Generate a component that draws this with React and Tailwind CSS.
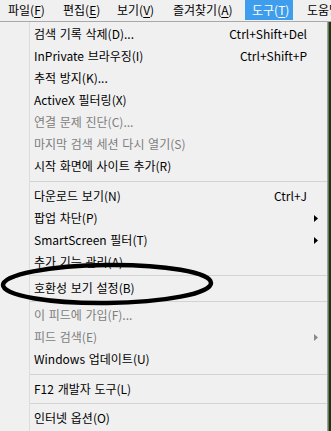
import React from "react";

const menuBar = [
  { label: "파일", key: "F", w: "w-[55px]" },
  { label: "편집", key: "E", w: "w-[54px]" },
  { label: "보기", key: "V", w: "w-[56px]" },
  { label: "즐겨찾기", key: "A", w: "w-[79px]" },
  { label: "도구", key: "T", w: "w-[48px]", active: true },
];

// sep: height of separator block, line sits in the middle
const items = [
  { text: "검색 기록 삭제(D)...", shortcut: "Ctrl+Shift+Del" },
  { text: "InPrivate 브라우징(I)", shortcut: "Ctrl+Shift+P" },
  { text: "추적 방지(K)..." },
  { text: "ActiveX 필터링(X)" },
  { text: "연결 문제 진단(C)...", disabled: true },
  { text: "마지막 검색 세션 다시 열기(S)", disabled: true },
  { text: "시작 화면에 사이트 추가(R)" },
  { sep: "h-[8px]" },
  { text: "다운로드 보기(N)", shortcut: "Ctrl+J" },
  { text: "팝업 차단(P)", sub: true },
  { text: "SmartScreen 필터(T)", sub: true },
  { text: "추가 기능 관리(A)" },
  { sep: "h-[4px]" },
  { text: "호환성 보기 설정(B)" },
  { sep: "h-[5px]" },
  { text: "이 피드에 가입(F)...", disabled: true },
  { text: "피드 검색(E)", sub: true, disabled: true },
  { text: "Windows 업데이트(U)" },
  { sep: "h-[8px]" },
  { text: "F12 개발자 도구(L)" },
  { sep: "h-[7px]" },
  { text: "인터넷 옵션(O)" },
];

function Arrow({ disabled }) {
  return (
    <svg width="4" height="7" viewBox="0 0 4 7" className="block">
      <path d="M0 0 L4 3.5 L0 7 Z" fill={disabled ? "#8a8a8a" : "#000"} />
    </svg>
  );
}

export default function App() {
  return (
    <div
      className="relative w-[331px] h-[431px] overflow-hidden bg-[#f0f0f0] text-[12px] text-black"
      style={{ fontFamily: '"Noto Sans CJK KR", "Noto Sans", sans-serif' }}
    >
      {/* menu bar */}
      <div className="flex h-[22px] border-b border-[#a9a9a9] pl-[1px]">
        {menuBar.map((m) => (
          <div
            key={m.label}
            className={`${m.w} shrink-0 h-[20px] flex items-center pl-[7px] whitespace-nowrap ${
              m.active ? "bg-[#3f9ded] text-white" : ""
            }`}
          >
            {m.label}(<u className="underline-offset-2">{m.key}</u>)
          </div>
        ))}
        <div className="shrink-0 h-[20px] flex items-center pl-[14px] whitespace-nowrap">
          도움말(<u>H</u>)
        </div>
      </div>

      {/* dropdown */}
      <div className="flex h-[409px]">
        <div className="w-[328px] shrink-0 flex border-r border-[#a0a0a0]">
          <div className="w-[30px] border-r border-[#dcdcdc]" />
          <div className="flex-1 pt-[1px] [word-spacing:1px]">
            {items.map((it, i) =>
              it.sep ? (
                <div key={i} className={`${it.sep} flex items-center`}>
                  <div className="w-full h-px bg-[#d3d3d3]" />
                </div>
              ) : (
                <div
                  key={i}
                  className={`h-[22px] flex items-center pl-[4px] whitespace-nowrap ${
                    it.disabled ? "text-[#7d7d7d]" : ""
                  }`}
                >
                  <span className="flex-1">{it.text}</span>
                  {it.shortcut && <span className="[word-spacing:0]">{it.shortcut}</span>}
                  <span className="w-[20px] flex items-center pl-[7px]">
                    {it.sub && <Arrow disabled={it.disabled} />}
                  </span>
                </div>
              )
            )}
          </div>
        </div>
        <div className="flex-1 bg-[#24301f] border-l border-[#5d7f3c]" />
      </div>

      {/* hand-drawn annotation */}
      <svg
        className="absolute left-0 top-0 pointer-events-none"
        width="331"
        height="431"
      >
        <ellipse
          cx="107"
          cy="284"
          rx="104"
          ry="19"
          fill="none"
          stroke="#000"
          strokeWidth="4.5"
          transform="rotate(-0.6 107 284)"
        />
      </svg>
    </div>
  );
}
